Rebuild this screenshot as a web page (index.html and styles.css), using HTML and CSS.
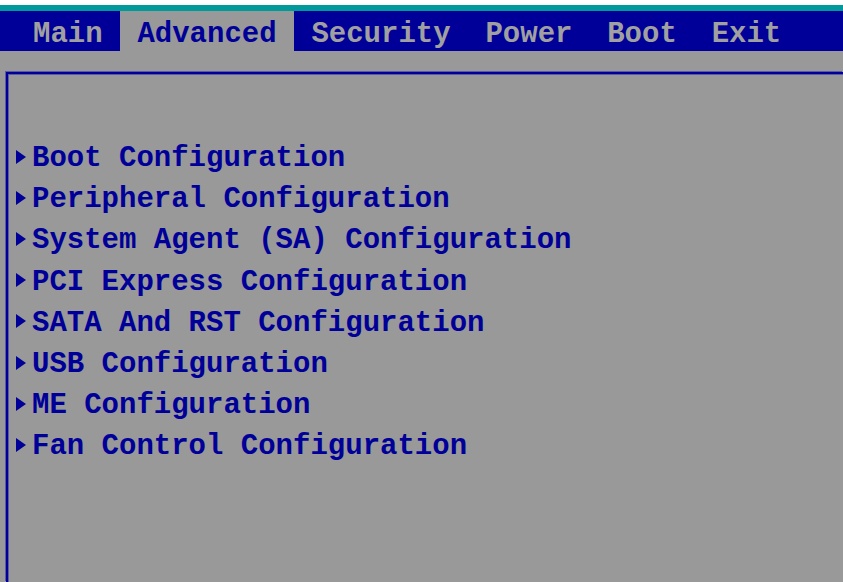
FILE: index.html
```html
<!DOCTYPE html>
<html>
<head>
<meta charset="utf-8">
<link rel="stylesheet" href="styles.css">
</head>
<body>
<div class="screen">
  <div class="topline"></div>
  <nav class="menubar">
    <span class="tab">Main</span>
    <span class="tab active">Advanced</span>
    <span class="tab">Security</span>
    <span class="tab">Power</span>
    <span class="tab">Boot</span>
    <span class="tab">Exit</span>
  </nav>
  <div class="frame">
    <ul class="items">
      <li class="item"><span class="arrow"><svg width="10" height="14" viewBox="0 0 10 14"><polygon points="0,0 10,7 0,14" fill="#000099"/></svg></span><span class="label">Boot Configuration</span></li>
      <li class="item"><span class="arrow"><svg width="10" height="14" viewBox="0 0 10 14"><polygon points="0,0 10,7 0,14" fill="#000099"/></svg></span><span class="label">Peripheral Configuration</span></li>
      <li class="item"><span class="arrow"><svg width="10" height="14" viewBox="0 0 10 14"><polygon points="0,0 10,7 0,14" fill="#000099"/></svg></span><span class="label">System Agent (SA) Configuration</span></li>
      <li class="item"><span class="arrow"><svg width="10" height="14" viewBox="0 0 10 14"><polygon points="0,0 10,7 0,14" fill="#000099"/></svg></span><span class="label">PCI Express Configuration</span></li>
      <li class="item"><span class="arrow"><svg width="10" height="14" viewBox="0 0 10 14"><polygon points="0,0 10,7 0,14" fill="#000099"/></svg></span><span class="label">SATA And RST Configuration</span></li>
      <li class="item"><span class="arrow"><svg width="10" height="14" viewBox="0 0 10 14"><polygon points="0,0 10,7 0,14" fill="#000099"/></svg></span><span class="label">USB Configuration</span></li>
      <li class="item"><span class="arrow"><svg width="10" height="14" viewBox="0 0 10 14"><polygon points="0,0 10,7 0,14" fill="#000099"/></svg></span><span class="label">ME Configuration</span></li>
      <li class="item"><span class="arrow"><svg width="10" height="14" viewBox="0 0 10 14"><polygon points="0,0 10,7 0,14" fill="#000099"/></svg></span><span class="label">Fan Control Configuration</span></li>
    </ul>
  </div>
</div>
</body>
</html>
```

FILE: styles.css
```css
html, body {
  margin: 0;
  padding: 0;
  background: #999999;
}
.screen {
  width: 843px;
  height: 582px;
  overflow: hidden;
  background: #999999;
  font-family: "Liberation Mono", "DejaVu Sans Mono", monospace;
  font-size: 29px;
  font-weight: bold;
  display: flex;
  flex-direction: column;
}
.topline {
  height: 6px;
  border-top: 5px solid #ffffff;
  background: #009a9a;
  flex: none;
}
.menubar {
  flex: none;
  height: 40px;
  box-sizing: border-box;
  padding: 0 0 0 15.6px;
  line-height: 32px;
  background: #000099;
  color: #a0a0a0;
  display: flex;
}
.tab {
  padding: 8px 17.4px 0;
  white-space: pre;
}
.tab.active {
  background: #999999;
  color: #000099;
}
.frame {
  flex: 1;
  margin: 21px 0 0 6px;
  border-top: 2px solid #000099;
  border-left: 2px solid #000099;
  box-shadow: inset 1px 1px 0 #5a5aa8, -1px -1px 0 #5a5aa8;
  padding: 64px 0 0 6.6px;
}
.items {
  list-style: none;
  margin: 0;
  padding: 0;
  color: #000099;
  line-height: 41.2px;
}
.item {
  display: flex;
  align-items: center;
  height: 41.2px;
}
.label {
  white-space: pre;
}
.arrow {
  width: 17.4px;
  flex: none;
  display: flex;
  align-items: center;
  padding-left: 1.5px;
  box-sizing: border-box;
  margin-bottom: 4px;
}
.arrow svg {
  display: block;
  flex: none;
}
```
